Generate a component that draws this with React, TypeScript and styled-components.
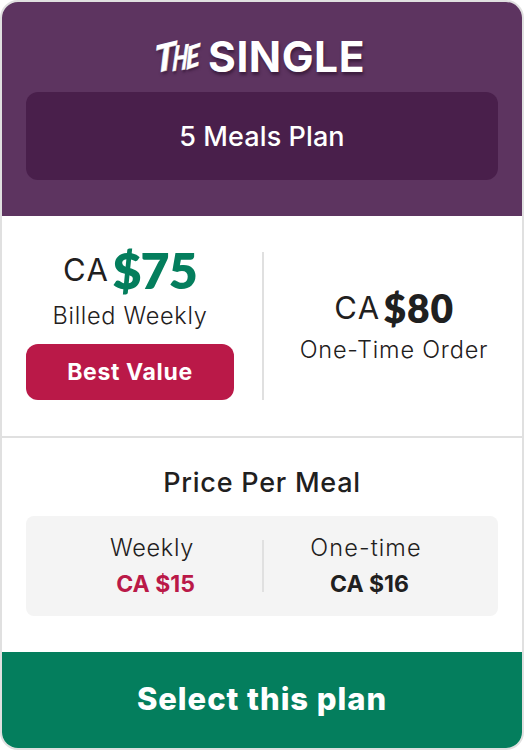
import React from "react";
import styled, { createGlobalStyle } from "styled-components";

const GlobalStyle = createGlobalStyle`
  * { box-sizing: border-box; }
  body { margin: 0; background: #fff; }
`;

const Card = styled.article`
  width: 524px;
  height: 750px;
  display: flex;
  flex-direction: column;
  overflow: hidden;
  border: 2px solid #e0e0e0;
  border-radius: 18px;
  background: #fff;
  color: #1f2020;
  font-family: Inter, sans-serif;
`;

const Header = styled.header`
  height: 214px;
  padding: 35px 24px 0;
  background: #5d3460;
  color: #fff;
`;

const Title = styled.h1`
  margin: 0 0 15px;
  height: 40px;
  display: flex;
  justify-content: center;
  align-items: center;
  gap: 6px;
  padding-right: 4px;
  line-height: 40px;
  text-shadow: 1px 3px 3px rgba(30, 8, 32, 0.5);
`;

const Script = styled.span`
  display: flex;
  width: 47px;
  font: italic 700 34px/40px Lato, sans-serif;
  -webkit-text-stroke: 1.3px #fff;
  paint-order: stroke fill;
`;

const ScriptLetter = styled.span<{ $width: number; $transform: string }>`
  width: ${(p) => p.$width}px;
  transform: ${(p) => p.$transform};
  transform-origin: 0 50%;
`;

const Name = styled.span`
  font-size: 42.5px;
  font-weight: 750;
  letter-spacing: 0.5px;
`;

const PlanBox = styled.div`
  height: 88px;
  display: grid;
  place-items: center;
  border-radius: 12px;
  background: #491f4b;
  font-size: 27px;
  font-weight: 450;
  letter-spacing: 0.1px;
`;

const Prices = styled.section`
  height: 222px;
  padding: 36px 0;
  display: grid;
  grid-template-columns: 260px 2px 258px;
  border-bottom: 2px solid #e0e0e0;
`;

const Offer = styled.div<{ $side: "left" | "right" }>`
  display: flex;
  flex-direction: column;
  align-items: center;
  padding: ${(p) => (p.$side === "left" ? "0 28px 0 24px" : "38px 0 0 2px")};
`;

const Divider = styled.div`
  background: #e0e0e0;
`;

const Price = styled.div`
  height: 36px;
  display: flex;
  align-items: center;
`;

const Currency = styled.span`
  font-size: 31px;
  line-height: 36px;
  font-weight: 420;
  letter-spacing: 1.5px;
`;

const Amount = styled.strong<{ $featured?: boolean }>`
  font-family: Lato, sans-serif;
  font-size: ${(p) => (p.$featured ? 50 : 39)}px;
  font-weight: 800;
  line-height: 36px;
  color: ${(p) => (p.$featured ? "#047e5d" : "inherit")};
  letter-spacing: ${(p) => (p.$featured ? -0.8 : 0.8)}px;
  margin-left: 3px;
  margin-top: -1px;
`;

const Label = styled.div<{ $top?: number; $spacing?: number }>`
  margin-top: ${(p) => p.$top ?? 0}px;
  font-size: 23.5px;
  line-height: 32px;
  font-weight: 360;
  letter-spacing: ${(p) => p.$spacing ?? 0.7}px;
  white-space: nowrap;
`;

const Badge = styled.div`
  width: 208px;
  height: 56px;
  margin-top: 12px;
  display: grid;
  place-items: center;
  border-radius: 12px;
  background: #ba1948;
  color: #fff;
  font-size: 23px;
  font-weight: 650;
  letter-spacing: 0.65px;
`;

const PerMeal = styled.section`
  height: 214px;
  padding: 26px 24px 0;
`;

const Subtitle = styled.h2`
  margin: 0 0 14px;
  font-size: 27px;
  line-height: 38px;
  font-weight: 450;
  letter-spacing: 0.75px;
  text-align: center;
`;

const Panel = styled.div`
  height: 100px;
  padding: 24px 0;
  display: grid;
  grid-template-columns: 236px 2px 234px;
  grid-template-rows: 52px;
  border-radius: 8px;
  background: #f4f4f4;
`;

const Rate = styled.div<{ $side: "left" | "right" }>`
  display: flex;
  flex-direction: column;
  align-items: center;
  margin-top: -8px;
  padding: ${(p) => (p.$side === "left" ? "0 0 0 16px" : "0 30px 0 0")};
`;

const RateValue = styled.strong<{ $accent?: boolean }>`
  margin-top: 4px;
  padding-left: 7px;
  font-size: 23px;
  line-height: 32px;
  font-weight: 650;
  color: ${(p) => (p.$accent ? "#ba1948" : "inherit")};
  white-space: nowrap;
`;

const SelectButton = styled.button`
  flex: 1;
  padding: 0 0 3px;
  border: 0;
  background: #047e5d;
  color: #fff;
  font: 780 31px Inter, sans-serif;
  letter-spacing: 0.95px;
`;

export default function App() {
  return (
    <>
      <GlobalStyle />
      <Card>
        <Header>
          <Title>
            <Script>
              <ScriptLetter $width={18} $transform="translateY(2px) skewY(-14deg) scale(1.08, 1.08)">T</ScriptLetter>
              <ScriptLetter $width={13} $transform="translateY(1px) skewX(-4deg) skewY(-8deg) scale(0.62, 1)">H</ScriptLetter>
              <ScriptLetter $width={16} $transform="translateY(1px) skewY(-18deg) scale(0.75, 0.88)">E</ScriptLetter>
            </Script>
            <Name>SINGLE</Name>
          </Title>
          <PlanBox>5 Meals Plan</PlanBox>
        </Header>
        <Prices>
          <Offer $side="left">
            <Price>
              <Currency>CA</Currency>
              <Amount $featured>$75</Amount>
            </Price>
            <Label $top={12}>Billed Weekly</Label>
            <Badge>Best Value</Badge>
          </Offer>
          <Divider />
          <Offer $side="right">
            <Price>
              <Currency>CA</Currency>
              <Amount>$80</Amount>
            </Price>
            <Label $top={8} $spacing={0.8}>One-Time Order</Label>
          </Offer>
        </Prices>
        <PerMeal>
          <Subtitle>Price Per Meal</Subtitle>
          <Panel>
            <Rate $side="left">
              <Label>Weekly</Label>
              <RateValue $accent>CA $15</RateValue>
            </Rate>
            <Divider />
            <Rate $side="right">
              <Label $spacing={1.1}>One-time</Label>
              <RateValue>CA $16</RateValue>
            </Rate>
          </Panel>
        </PerMeal>
        <SelectButton type="button">Select this plan</SelectButton>
      </Card>
    </>
  );
}
